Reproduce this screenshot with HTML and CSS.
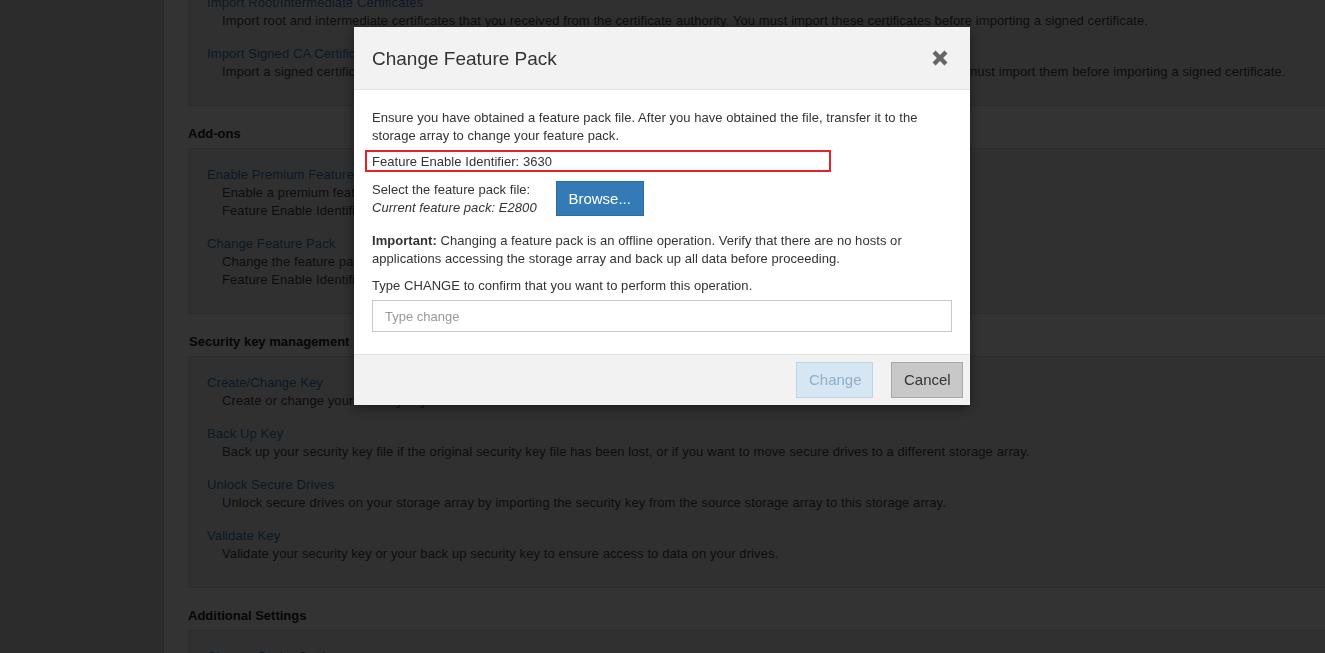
FILE: index.html
```html
<!DOCTYPE html>
<html>
<head>
<meta charset="utf-8">
<title>Change Feature Pack</title>
<link rel="stylesheet" href="styles.css">
</head>
<body>
<div class="page">
  <aside class="sidebar"></aside>
  <main class="content">
    <section class="panel panel-first">
      <div class="item">
        <a class="link">Import Root/Intermediate Certificates</a>
        <div class="desc">Import root and intermediate certificates that you received from the certificate authority. You must import these certificates before importing a signed certificate.</div>
      </div>
      <div class="item">
        <a class="link">Import Signed CA Certificates</a>
        <div class="desc">Import a signed certificate that you received from the certificate authority. If you have the root and intermediate certificates, you must import them before importing a signed certificate.</div>
      </div>
    </section>

    <h2 class="heading">Add-ons</h2>
    <section class="panel">
      <div class="item">
        <a class="link">Enable Premium Feature</a>
        <div class="desc">Enable a premium feature by using a key file that you obtained from your storage vendor.</div>
        <div class="desc">Feature Enable Identifier: 3630</div>
      </div>
      <div class="item">
        <a class="link">Change Feature Pack</a>
        <div class="desc">Change the feature pack on your storage array.</div>
        <div class="desc">Feature Enable Identifier: 3630</div>
      </div>
    </section>

    <h2 class="heading heading-sec">Security key management</h2>
    <section class="panel">
      <div class="item">
        <a class="link">Create/Change Key</a>
        <div class="desc">Create or change your security key that is used to secure drives.</div>
      </div>
      <div class="item">
        <a class="link">Back Up Key</a>
        <div class="desc">Back up your security key file if the original security key file has been lost, or if you want to move secure drives to a different storage array.</div>
      </div>
      <div class="item">
        <a class="link">Unlock Secure Drives</a>
        <div class="desc">Unlock secure drives on your storage array by importing the security key from the source storage array to this storage array.</div>
      </div>
      <div class="item">
        <a class="link">Validate Key</a>
        <div class="desc">Validate your security key or your back up security key to ensure access to data on your drives.</div>
      </div>
    </section>

    <h2 class="heading">Additional Settings</h2>
    <section class="panel">
      <div class="item">
        <a class="link">Change Cache Settings</a>
        <div class="desc">Change the cache settings for the storage array.</div>
      </div>
    </section>
  </main>
</div>

<div class="overlay"></div>

<div class="modal">
  <div class="modal-header">
    <h1 class="modal-title">Change Feature Pack</h1>
    <svg class="close" width="18" height="18" viewBox="0 0 18 18" aria-label="Close">
      <path d="M1.5 4.6 L4.6 1.5 L9 5.9 L13.4 1.5 L16.5 4.6 L12.1 9 L16.5 13.4 L13.4 16.5 L9 12.1 L4.6 16.5 L1.5 13.4 L5.9 9 Z" fill="#666"/>
    </svg>
  </div>
  <div class="modal-body">
    <p class="intro">Ensure you have obtained a feature pack file. After you have obtained the file, transfer it to the storage array to change your feature pack.</p>
    <div class="identifier">Feature Enable Identifier: 3630</div>
    <div class="file-row">
      <div class="file-label">
        <div>Select the feature pack file:</div>
        <div class="current">Current feature pack: E2800</div>
      </div>
      <button class="btn btn-primary">Browse...</button>
    </div>
    <p class="important"><strong>Important:</strong> Changing a feature pack is an offline operation. Verify that there are no hosts or applications accessing the storage array and back up all data before proceeding.</p>
    <p class="confirm">Type CHANGE to confirm that you want to perform this operation.</p>
    <input class="confirm-input" type="text" placeholder="Type change">
  </div>
  <div class="modal-footer">
    <button class="btn btn-disabled">Change</button>
    <button class="btn btn-default">Cancel</button>
  </div>
</div>
</body>
</html>
```

FILE: styles.css
```css
html, body {
  margin: 0;
  padding: 0;
  height: 100%;
  overflow: hidden;
}

body {
  font-family: "Liberation Sans", Arial, sans-serif;
  font-size: 13px;
  line-height: 18px;
  letter-spacing: 0.1px;
  color: #333;
  background: #fff;
}

.page {
  display: flex;
  min-height: 100%;
}

.sidebar {
  width: 163px;
  flex: 0 0 163px;
  background: #dcdcdc;
  border-right: 1px solid #c9c9c9;
}

.content {
  flex: 1;
  padding-left: 24px;
}

.panel {
  background: #f0f0f0;
  border: 1px solid #dcdcdc;
  border-right: none;
  padding: 17px 0 9px 18px;
}

.panel-first {
  margin-top: -24px;
}

.item {
  margin-bottom: 15px;
}

.link {
  display: block;
  color: #337ab7;
  text-decoration: none;
}

.desc {
  padding-left: 15px;
  color: #444;
}

.heading {
  margin: 19px 0 5px 0;
  font-size: 13px;
  line-height: 18px;
  font-weight: bold;
  letter-spacing: 0;
  color: #222;
}

.heading-sec {
  margin-left: 1px;
}

.overlay {
  position: fixed;
  inset: 0;
  background: rgba(0, 0, 0, 0.8);
}

.modal {
  position: fixed;
  left: 354px;
  top: 27px;
  width: 616px;
  background: #fff;
  letter-spacing: 0.05px;
  box-shadow: 0 3px 12px rgba(0, 0, 0, 0.5);
}

.modal-header {
  height: 62px;
  background: #f2f2f2;
  border-bottom: 1px solid #e3e3e3;
  display: flex;
  align-items: center;
  justify-content: space-between;
  padding: 0 21px 0 18px;
}

.modal-title {
  margin: 0;
  padding-top: 2px;
  font-size: 19px;
  font-weight: normal;
  line-height: 22px;
  letter-spacing: 0;
  color: #333;
}

.close {
  display: block;
  margin-top: -1px;
}

.modal-body {
  padding: 19px 18px 22px 18px;
}

.modal-body p {
  margin: 0;
}

.identifier {
  box-sizing: border-box;
  width: 466px;
  height: 22px;
  margin: 5px 0 0 -7px;
  padding: 1px 0 0 5px;
  border: 2px solid #e8202a;
  line-height: 18px;
}

.file-row {
  display: flex;
  align-items: flex-start;
  gap: 19px;
  margin-top: 9px;
}

.current {
  font-style: italic;
}

.important {
  margin-top: 15px !important;
}

.confirm {
  margin-top: 9px !important;
}

.confirm-input {
  display: block;
  box-sizing: border-box;
  width: 100%;
  height: 32px;
  margin-top: 5px;
  padding: 0 12px;
  border: 1px solid #c8c8c8;
  font-family: "Liberation Sans", Arial, sans-serif;
  font-size: 13px;
  color: #333;
  outline: none;
}

.confirm-input::placeholder {
  color: #999;
}

.modal-footer {
  background: #f2f2f2;
  border-top: 1px solid #e3e3e3;
  display: flex;
  justify-content: flex-end;
  gap: 18px;
  padding: 7px 7px 7px 0;
}

.btn {
  box-sizing: border-box;
  height: 36px;
  padding: 0 12px;
  border: 1px solid transparent;
  font-family: "Liberation Sans", Arial, sans-serif;
  font-size: 15px;
  line-height: 34px;
  border-radius: 0;
}

.btn-primary {
  width: 88px;
  height: 35px;
  margin-top: 0;
  padding: 0;
  background: #337ab7;
  border-color: #2e6da4;
  color: #fff;
}

.btn-disabled {
  width: 77px;
  background: #d6e6f2;
  border-color: #bcd5ea;
  color: #8db0cf;
}

.btn-default {
  width: 72px;
  background: #c8c8c8;
  border-color: #a9a9a9;
  color: #333;
}
```
